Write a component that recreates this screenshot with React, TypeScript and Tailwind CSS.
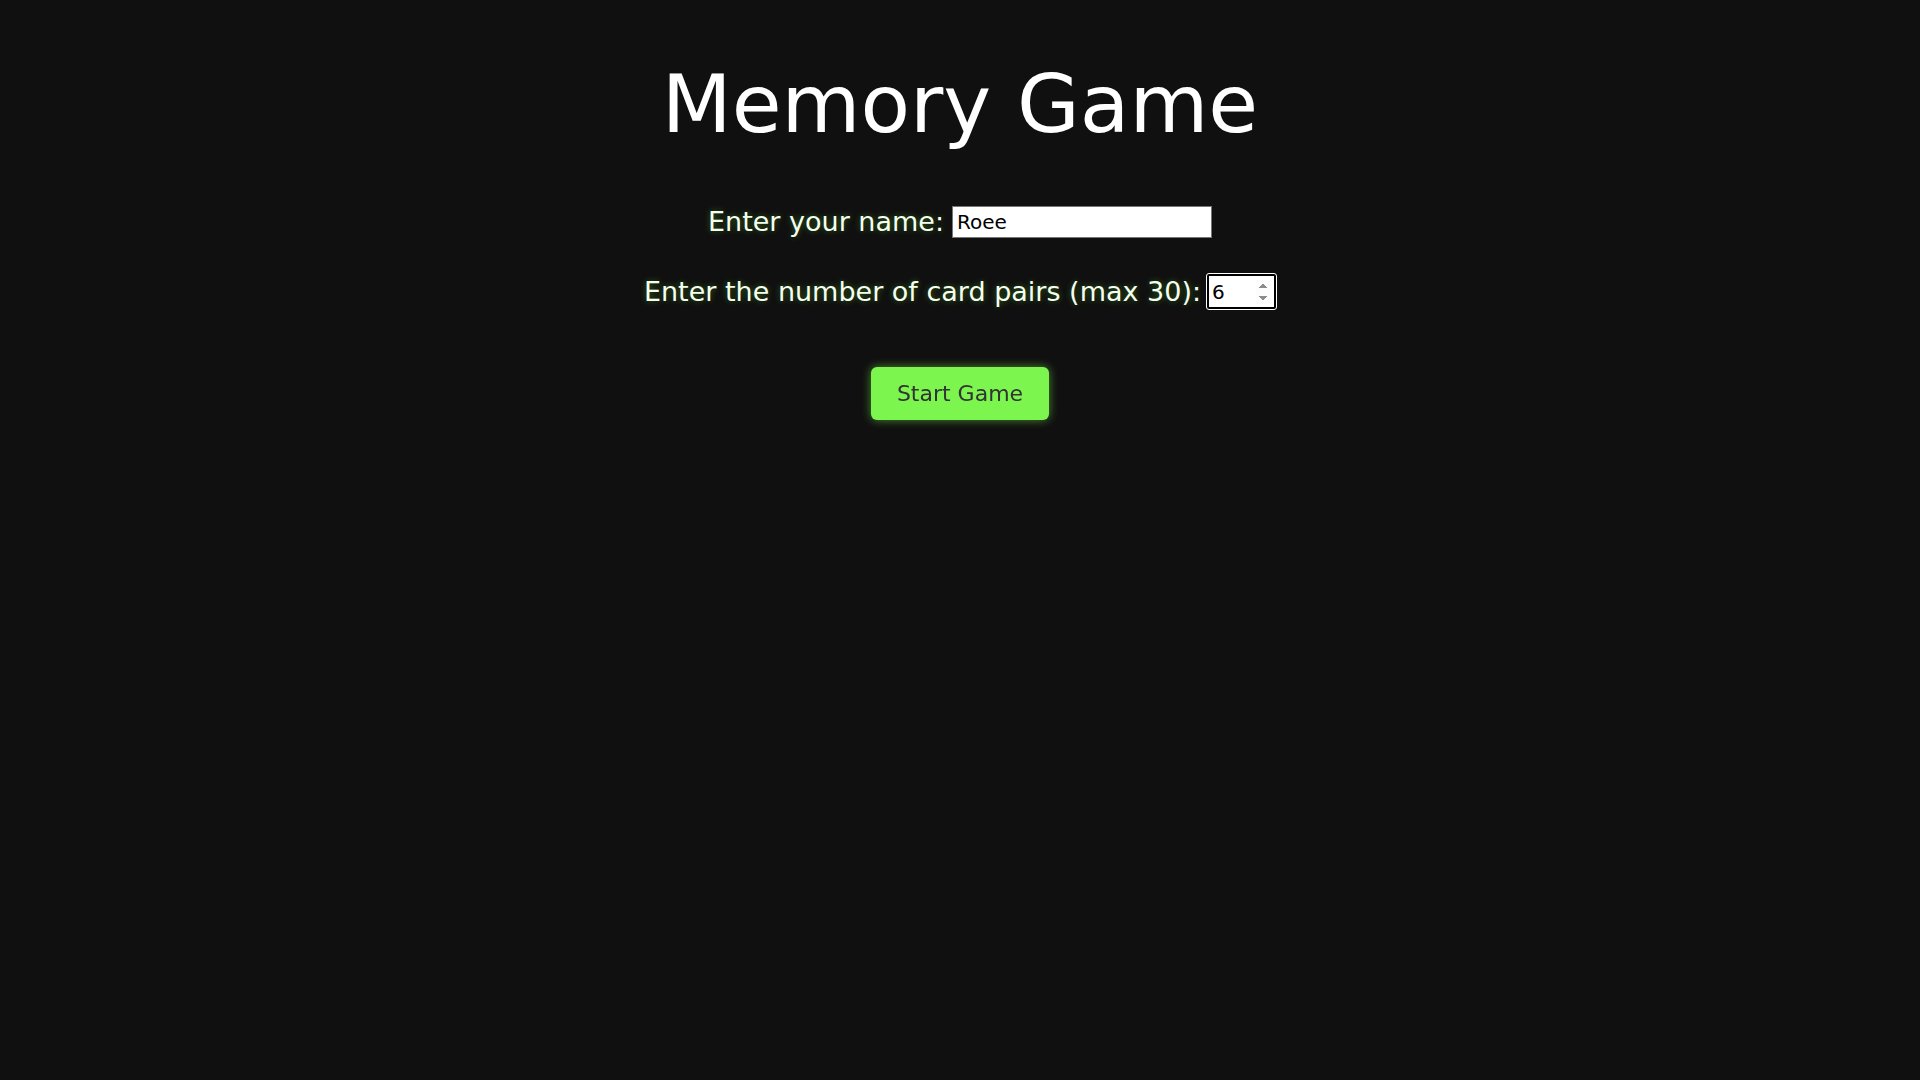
import React, { useState } from "react";

const font = "font-['DejaVu_Sans','Liberation_Sans',sans-serif]";
const glow = "[text-shadow:0_0_6px_rgba(90,200,40,0.45)]";

export default function App() {
  const [name, setName] = useState("Roee");
  const [pairs, setPairs] = useState("6");

  return (
    <div className={`min-h-screen w-full bg-[#101010] ${font} text-white`}>
      <div className="flex flex-col items-center pt-[54px]">
        <h1 className="text-[81px] leading-[100px] font-normal text-white">Memory Game</h1>

        <div className="mt-[48px] flex items-center gap-[8px]">
          <label className={`text-[27px] text-[#f4fff0] ${glow}`}>Enter your name:</label>
          <input
            value={name}
            onChange={(e) => setName(e.target.value)}
            className={`h-[32px] w-[260px] border border-[#767676] bg-white px-[4px] text-[20px] text-black outline-none ${font}`}
          />
        </div>

        <div className="mt-[29px] flex items-center gap-[6px]">
          <label className={`text-[27px] text-[#f4fff0] ${glow}`}>Enter the number of card pairs (max 30):</label>
          <input
            type="number"
            min={1}
            max={30}
            autoFocus
            value={pairs}
            onChange={(e) => setPairs(e.target.value)}
            className={`h-[35px] w-[69px] rounded-[2px] border-2 border-black bg-white px-[3px] text-[20px] text-black outline outline-1 outline-white ${font}`}
          />
        </div>

        <button className="mt-[55px] h-[53px] w-[178px] rounded-[6px] bg-[#7cf54f] text-[22px] text-[#333333] shadow-[0_0_10px_rgba(124,245,79,0.55)]">
          Start Game
        </button>
      </div>
    </div>
  );
}
